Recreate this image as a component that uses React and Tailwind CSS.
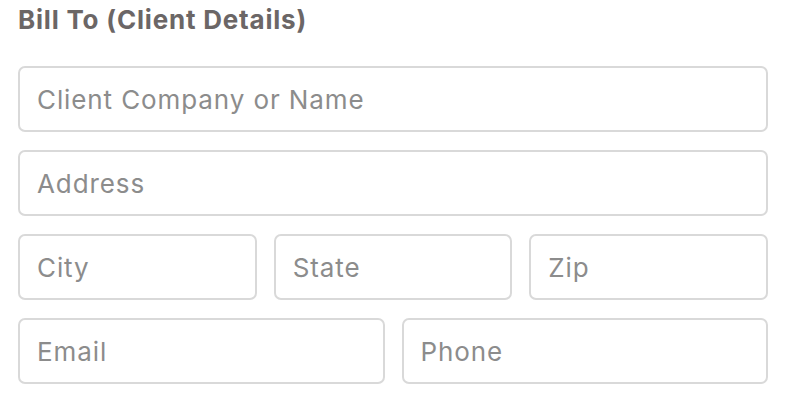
import React from 'react';

const Field = ({ placeholder, className = '' }) => (
  <input
    type="text"
    placeholder={placeholder}
    className={`h-[66px] w-full min-w-0 rounded-[7px] border-2 border-[#d9d9d9] bg-white px-[17px] text-[26px] tracking-[0.9px] text-[#333] placeholder:text-[#8c8c8c] outline-none ${className}`}
  />
);

export default function App() {
  return (
    <div className="min-h-screen bg-white px-[18px] pt-[4px] font-['Inter',sans-serif]">
      <h2 className="text-[26px] leading-[32px] font-bold tracking-[0.8px] text-[#6b6666]">Bill To (Client Details)</h2>

      <div className="mt-[30px] flex w-[750px] flex-col gap-[18px]">
        <Field placeholder="Client Company or Name" />
        <Field placeholder="Address" />
        <div className="grid grid-cols-3 gap-[17px]">
          <Field placeholder="City" />
          <Field placeholder="State" />
          <Field placeholder="Zip" />
        </div>
        <div className="grid grid-cols-2 gap-[17px]">
          <Field placeholder="Email" />
          <Field placeholder="Phone" />
        </div>
      </div>
    </div>
  );
}
